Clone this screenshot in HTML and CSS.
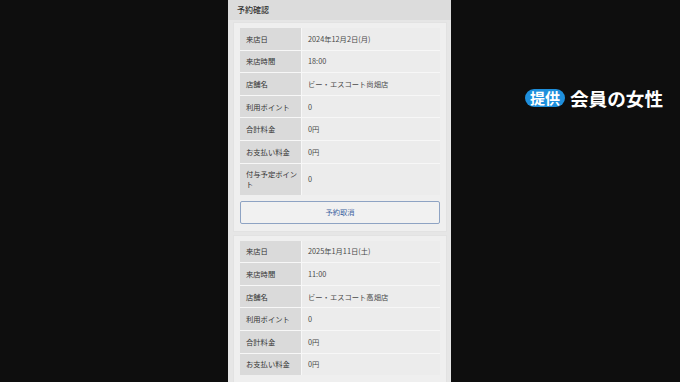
FILE: index.html
```html
<!DOCTYPE html>
<html lang="ja">
<head>
    <meta charset="UTF-8">
    <meta name="viewport" content="width=device-width, initial-scale=1.0">
    <title>予約確認</title>
    <link rel="stylesheet" href="styles.css">
</head>
<body>

    <div class="side"></div>

    <!-- Phone screen -->
    <div class="panel">
        <div class="panel-title">予約確認</div>

        <div class="card">
            <div class="table">
                <div class="row"><div class="label">来店日</div><div class="value">2024年12月2日(月)</div></div>
                <div class="row"><div class="label">来店時間</div><div class="value">18:00</div></div>
                <div class="row"><div class="label">店舗名</div><div class="value">ビー・エスコート尚畑店</div></div>
                <div class="row"><div class="label">利用ポイント</div><div class="value">0</div></div>
                <div class="row"><div class="label">合計料金</div><div class="value">0円</div></div>
                <div class="row"><div class="label">お支払い料金</div><div class="value">0円</div></div>
                <div class="row tall"><div class="label">付与予定ポイント</div><div class="value">0</div></div>
            </div>
            <button class="cancel-btn">予約取消</button>
        </div>

        <div class="card">
            <div class="table">
                <div class="row"><div class="label">来店日</div><div class="value">2025年1月11日(土)</div></div>
                <div class="row"><div class="label">来店時間</div><div class="value">11:00</div></div>
                <div class="row"><div class="label">店舗名</div><div class="value">ビー・エスコート高畑店</div></div>
                <div class="row"><div class="label">利用ポイント</div><div class="value">0</div></div>
                <div class="row"><div class="label">合計料金</div><div class="value">0円</div></div>
                <div class="row"><div class="label">お支払い料金</div><div class="value">0円</div></div>
            </div>
        </div>
    </div>

    <!-- Caption -->
    <div class="caption-area">
        <div class="caption">
            <span class="badge">提供</span>
            <span class="caption-text">会員の女性</span>
        </div>
    </div>

</body>
</html>
```

FILE: styles.css
```css
/* Body styling */
body {
    margin: 0;
    width: 680px;
    height: 382px;
    overflow: hidden;
    background: #0e0e0e;
    display: flex;
    font-family: "Noto Sans CJK JP", "Noto Sans", sans-serif;
}

.side {
    width: 228px;
    flex-shrink: 0;
}

/* Phone screen */
.panel {
    width: 223px;
    flex-shrink: 0;
    background: #e6e6e6;
    height: 382px;
    overflow: hidden;
}

.panel-title {
    height: 20px;
    line-height: 20px;
    padding-left: 9px;
    background: #dcdcdc;
    font-size: 8px;
    font-weight: 500;
    color: #333;
}

.card {
    margin: 2px 4px 3px 5px;
    padding: 5px 6px 7px 6px;
    background: #efefef;
    border: 1px solid #e2e2e2;
}

/* Table */
.table {
    display: flex;
    flex-direction: column;
    gap: 1px;
    background: #f7f7f7;
}

.row {
    display: grid;
    grid-template-columns: 61px 1fr;
    gap: 1px;
    height: 21.6px;
}

.row.tall {
    height: 31px;
}

.label, .value {
    display: flex;
    align-items: center;
    font-size: 7.3px;
    color: #333;
}

.label {
    background: #dadada;
    padding: 0 2px 0 6px;
    line-height: 10px;
}

.value {
    background: #ececec;
    padding-left: 6px;
    color: #4a4a4a;
}

/* Cancel button */
.cancel-btn {
    display: block;
    width: 100%;
    height: 23px;
    margin-top: 6px;
    background: #f1f1f1;
    border: 1px solid #8ea3c3;
    border-radius: 2px;
    font-family: inherit;
    font-size: 7.3px;
    color: #3d63a0;
}

/* Caption */
.caption-area {
    padding: 87px 0 0 74px;
}

.caption {
    display: flex;
    align-items: center;
    gap: 5px;
}

.badge {
    background: #1e8fdc;
    color: #fff;
    font-size: 15px;
    font-weight: 700;
    line-height: 18px;
    padding: 0 5px;
    border-radius: 9px;
}

.caption-text {
    color: #fff;
    font-size: 18.6px;
    font-weight: 700;
    line-height: 22px;
}
```
